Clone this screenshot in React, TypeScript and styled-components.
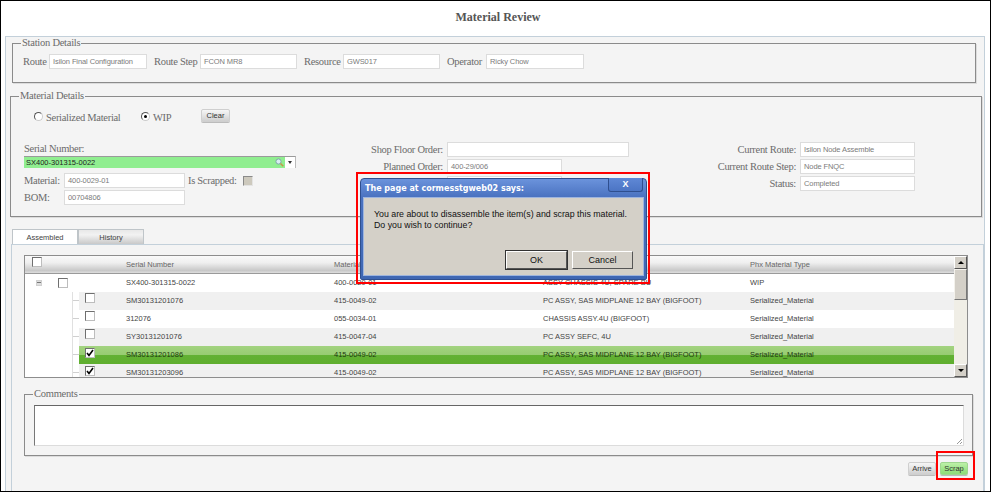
import { createGlobalStyle, styled } from "styled-components";

const GlobalStyle = createGlobalStyle`
	html, body {
		margin: 0;
		padding: 0;
		background: #fff;
		overflow: hidden;
	}
	* {
		box-sizing: border-box;
	}
`;

const SERIF = `"Liberation Serif", serif`;
const SANS = `"Liberation Sans", sans-serif`;

const Frame = styled.div`
	position: relative;
	width: 991px;
	height: 492px;
	border: 1px solid #000;
	background: #fff;
	overflow: hidden;
`;

const PageTitle = styled.h1`
	margin: 0;
	height: 35px;
	padding: 9px 0 0 5px;
	text-align: center;
	font: bold 12px/14px ${SERIF};
	color: #555;
`;

const Panel = styled.div`
	margin-left: 4px;
	width: 980px;
	height: 460px;
	border: 1px solid #c3d0da;
	background: #f4f4f4;
	padding: 0 0 0 4px;
`;

const Group = styled.fieldset<{ $left: number; $width: number; $height: number }>`
	margin: 0 0 0 ${(p) => p.$left}px;
	padding: 0;
	width: ${(p) => p.$width}px;
	height: ${(p) => p.$height}px;
	border: 1px solid #8b8b8b;
	box-shadow: 1px 1px 0 #dcdcdc;
	min-width: 0;
`;

const GroupTitle = styled.legend`
	margin-left: 8px;
	padding: 0 1px;
	font: 10.5px/12px ${SERIF};
	letter-spacing: -0.25px;
	color: #6b6b6b;
`;

const StationRow = styled.div`
	display: flex;
	align-items: center;
	padding: 5px 0 0 10px;
`;

const Label = styled.span`
	font: 10.5px/14px ${SERIF};
	letter-spacing: -0.3px;
	color: #6b6b6b;
	white-space: nowrap;
`;

const StationLabel = styled(Label)<{ $width: number }>`
	width: ${(p) => p.$width}px;
	flex: none;
`;

const Field = styled.div<{ $width: number }>`
	width: ${(p) => p.$width}px;
	height: 15px;
	flex: none;
	border: 1px solid #dcdcdc;
	background: #fff;
	padding-left: 3px;
	text-align: left;
	font: 7.5px/13px ${SANS};
	letter-spacing: -0.1px;
	color: #7b7b7b;
	white-space: nowrap;
	overflow: hidden;
`;

const StationField = styled(Field)`
	margin-right: 7px;
`;

const MaterialGroup = styled(Group)`
	margin-top: 7px;
`;

const RadioRow = styled.div`
	display: flex;
	align-items: center;
	height: 22px;
	margin-top: 5px;
	padding-left: 23px;
`;

const RadioItem = styled.label<{ $width: number }>`
	display: flex;
	align-items: center;
	gap: 3px;
	width: ${(p) => p.$width}px;
`;

const Radio = styled.span<{ $on?: boolean }>`
	position: relative;
	top: -2px;
	width: 9px;
	height: 9px;
	border-radius: 50%;
	border: 1px solid #555;
	border-right-color: #ccc;
	border-bottom-color: #ccc;
	background: #fff;
	display: flex;
	align-items: center;
	justify-content: center;
	&::after {
		content: "";
		width: 3px;
		height: 3px;
		border-radius: 50%;
		background: ${(p) => (p.$on ? "#000" : "transparent")};
	}
`;

const SmallButton = styled.button<{ $green?: boolean }>`
	height: 13px;
	padding: 0;
	border: 1px solid ${(p) => (p.$green ? "#9ed68f" : "#cfcfcf")};
	border-radius: 2px;
	background: ${(p) =>
		p.$green
			? "linear-gradient(#bdf0a8, #9fe58a 55%, #8edc78)"
			: "linear-gradient(#f6f6f6, #e4e4e4 50%, #cfcfcf)"};
	box-shadow: 0 1px 0 #bbb;
	font: 7.5px/11px ${SANS};
	color: #333;
`;

const ClearButton = styled(SmallButton)`
	width: 29px;
	position: relative;
	top: -3px;
`;

const Columns = styled.div`
	display: grid;
	grid-template-columns: 348px 337px 1fr;
	margin-top: 13px;
`;

const LeftColumn = styled.div`
	padding-left: 13px;
`;

const SerialLabel = styled(Label)`
	display: block;
`;

const Combo = styled.div`
	display: flex;
	width: 272px;
	height: 12px;
	border-top: 1px solid #9a9a9a;
	border-right: 1px solid #bbb;
	background: #fff;
`;

const ComboText = styled.div`
	flex: 1;
	display: flex;
	justify-content: space-between;
	align-items: center;
	background: #90ee90;
	padding: 0 1px 0 2px;
	font: 7.5px/11px ${SANS};
	color: #222;
`;

const ComboArrow = styled.div`
	width: 10px;
	display: flex;
	align-items: center;
	justify-content: center;
	&::after {
		content: "";
		border: 2.5px solid transparent;
		border-top: 3px solid #333;
		border-bottom: 0;
	}
`;

const MaterialRow = styled.div`
	display: flex;
	align-items: center;
	height: 15px;
	margin-top: 2px;
`;

const FirstMaterialRow = styled(MaterialRow)`
	margin-top: 5px;
`;

const MaterialLabel = styled(Label)`
	width: 40px;
	flex: none;
`;

const ScrapLabel = styled(Label)`
	width: 55px;
	flex: none;
	margin-left: 3px;
`;

const ScrapBox = styled.span`
	width: 10px;
	height: 10px;
	background: #cdc9bd;
	border: 1px solid #8a8a8a;
	border-right-color: #e4e4e4;
	border-bottom-color: #e4e4e4;
`;

const StackColumn = styled.div`
	display: flex;
	flex-direction: column;
	gap: 2px;
`;

const LabelledRow = styled.div<{ $labelWidth: number }>`
	display: grid;
	grid-template-columns: ${(p) => p.$labelWidth}px auto;
	justify-content: start;
	column-gap: 4px;
	align-items: center;
	height: 15px;
	text-align: right;
`;

const TabRow = styled.div`
	display: flex;
	margin: 12px 0 0 2px;
	height: 15px;
`;

const Tab = styled.div<{ $active?: boolean }>`
	width: 66px;
	text-align: center;
	border: 1px solid #bfc5c9;
	border-bottom: 0;
	background: ${(p) => (p.$active ? "#fff" : "linear-gradient(#e8e8e8, #f2f2f2 35%, #c9c9c9)")};
	font: 7.5px/15px ${SANS};
	color: #444;
`;

const TabPanel = styled.div`
	margin-left: 1px;
	width: 973px;
	height: 247px;
	border-left: 1px solid #c3d0da;
	border-top: 1px solid #c3d0da;
	border-right: 1px solid #c3d0da;
	padding: 10px 0 0 12px;
`;

const Grid = styled.div`
	display: flex;
	width: 944px;
	height: 123px;
	border: 1px solid #8d8d8d;
	background: #fff;
`;

const GridBody = styled.div`
	flex: 1;
	min-width: 0;
	overflow: hidden;
`;

const HeaderRow = styled.div`
	display: grid;
	grid-template-columns: 101px 208px 209px 207px 1fr;
	align-items: center;
	height: 18px;
	background: linear-gradient(#fafafa, #efefef 40%, #c8c8c8 85%, #dedede);
	border-bottom: 1px solid #9a9a9a;
	font: 7.5px/17px ${SANS};
	color: #666;
`;

const Box = styled.span`
	display: inline-flex;
	align-items: center;
	justify-content: center;
	width: 10px;
	height: 10px;
	background: #fff;
	border: 1px solid #6f6f6f;
	border-right-color: #bdbdbd;
	border-bottom-color: #bdbdbd;
`;

const HeaderBox = styled(Box)`
	margin-left: 7px;
`;

const RootCell = styled.div`
	display: flex;
	align-items: center;
	padding-left: 11px;
	gap: 16px;
`;

const Expander = styled.span`
	width: 6px;
	height: 6px;
	background: #dedede;
	border: 1px solid #d0d0d0;
	position: relative;
	&::after {
		content: "";
		position: absolute;
		left: 0;
		top: 1px;
		width: 4px;
		height: 1px;
		background: #777;
	}
`;

const Row = styled.div<{ $shade?: "alt" | "selected" }>`
	display: grid;
	align-items: center;
	height: 18px;
	font: 7.5px/18px ${SANS};
	white-space: nowrap;
	background: ${(p) =>
		p.$shade === "selected"
			? "linear-gradient(#a3d380, #97cc72 48%, #62b133 50%, #5fae2f)"
			: p.$shade === "alt"
				? "#f0f0f0"
				: "#fff"};
	color: ${(p) => (p.$shade === "selected" ? "#1d3a10" : "#444")};
`;

const RootRow = styled(Row)`
	grid-template-columns: 101px 208px 209px 207px 1fr;
`;

const ChildLine = styled.div`
	display: flex;
	height: 18px;
`;

const TreeGutter = styled.div`
	position: relative;
	width: 54px;
	background: #fff;
	&::before {
		content: "";
		position: absolute;
		left: 47px;
		top: 0;
		bottom: 0;
		width: 1px;
		background: #e0e0e0;
	}
	&::after {
		content: "";
		position: absolute;
		left: 48px;
		top: 8px;
		width: 6px;
		height: 1px;
		background: #d0d0d0;
	}
`;

const ChildRow = styled(Row)`
	flex: 1;
	grid-template-columns: 47px 208px 209px 207px 1fr;
`;

const ChildBox = styled(Box)`
	margin-left: 6px;
`;

const ScrollBar = styled.div`
	width: 13px;
	display: flex;
	flex-direction: column;
	background: #f0eee6;
`;

const ScrollButton = styled.div<{ $down?: boolean }>`
	height: 13px;
	flex: none;
	background: #d4d0c8;
	border: 1px solid #fff;
	border-right-color: #555;
	border-bottom-color: #555;
	display: flex;
	align-items: center;
	justify-content: center;
	&::after {
		content: "";
		border: 3px solid transparent;
		${(p) => (p.$down ? "border-top: 3px solid #000; border-bottom: 0;" : "border-bottom: 3px solid #000; border-top: 0;")}
	}
`;

const ScrollThumb = styled.div`
	height: 31px;
	flex: none;
	background: #d4d0c8;
	border: 1px solid #f4f2ec;
	border-right-color: #777;
	border-bottom-color: #777;
`;

const ScrollTrack = styled.div`
	flex: 1;
`;

const CommentsGroup = styled(Group)`
	margin-top: 10px;
`;

const CommentBox = styled.div`
	margin: 5px 0 0 9px;
	width: 930px;
	height: 41px;
	background: #fff;
	border: 1px solid #dcdcdc;
	border-top: 1px solid #666;
	border-left: 1px solid #777;
	position: relative;
`;

const ResizeGrip = styled.svg`
	position: absolute;
	right: 0;
	bottom: 0;
`;

const Actions = styled.div`
	display: flex;
	justify-content: flex-end;
	gap: 4px;
	width: 944px;
	margin-top: 6px;
`;

const ActionButton = styled(SmallButton)`
	width: 28px;
`;

const Dialog = styled.div`
	position: absolute;
	left: 359px;
	top: 177px;
	width: 287px;
	height: 102px;
	border-radius: 4px 4px 2px 2px;
	background: linear-gradient(#6b93dc, #4a72c0 18%, #3f67b3);
	border: 1px solid #2f4f8f;
	padding: 18px 2px 3px;
`;

const DialogTitle = styled.div`
	position: absolute;
	left: 4px;
	top: 4px;
	font: bold 8px/11px "DejaVu Sans", sans-serif;
	color: #fff;
	white-space: nowrap;
`;

const DialogClose = styled.div`
	position: absolute;
	right: 3px;
	top: -1px;
	width: 35px;
	height: 14px;
	border: 1px solid #2f4f8f;
	border-top: 0;
	border-radius: 0 0 3px 3px;
	background: linear-gradient(#5f88d6, #4c75c4);
	color: #fff;
	text-align: center;
	font: bold 9px/12px ${SANS};
`;

const DialogBody = styled.div`
	height: 100%;
	background: #d4d0c8;
	border: 1px solid #9db4de;
	padding: 11px 10px 0;
	font: 8.8px/11px ${SANS};
	color: #111;
	display: flex;
	flex-direction: column;
`;

const DialogActions = styled.div`
	display: flex;
	justify-content: flex-end;
	gap: 5px;
	margin-top: 20px;
`;

const DialogButton = styled.button<{ $primary?: boolean }>`
	width: 61px;
	height: 18px;
	padding: 0;
	background: #d4d0c8;
	border: 1px solid #fff;
	border-right-color: #555;
	border-bottom-color: #555;
	outline: ${(p) => (p.$primary ? "1px solid #333" : "none")};
	font: 9px/14px ${SANS};
	color: #111;
`;

const Highlight = styled.div<{ $left: number; $top: number; $width: number; $height: number }>`
	position: absolute;
	left: ${(p) => p.$left}px;
	top: ${(p) => p.$top}px;
	width: ${(p) => p.$width}px;
	height: ${(p) => p.$height}px;
	border: 2px solid #f00;
	pointer-events: none;
`;

const Check = () => (
	<svg width="8" height="8" viewBox="0 0 8 8">
		<path d="M1 4l2 2.5L7 1" fill="none" stroke="#000" strokeWidth="1.6" />
	</svg>
);

const Magnifier = () => (
	<svg width="9" height="9" viewBox="0 0 9 9">
		<circle cx="3.5" cy="3.5" r="2.6" fill="#d8eef0" stroke="#7fa8a8" strokeWidth="1" />
		<path d="M5.5 5.5L8.3 8.3" stroke="#c49a4a" strokeWidth="1.6" />
	</svg>
);

const children: { serial: string; material: string; description: string; shade?: "alt" | "selected"; checked?: boolean }[] = [
	{ serial: "SM30131201076", material: "415-0049-02", description: "PC ASSY, SAS MIDPLANE 12 BAY (BIGFOOT)", shade: "alt" },
	{ serial: "312076", material: "055-0034-01", description: "CHASSIS ASSY.4U (BIGFOOT)" },
	{ serial: "SY30131201076", material: "415-0047-04", description: "PC ASSY SEFC, 4U", shade: "alt" },
	{ serial: "SM30131201086", material: "415-0049-02", description: "PC ASSY, SAS MIDPLANE 12 BAY (BIGFOOT)", shade: "selected", checked: true },
	{ serial: "SM30131203096", material: "415-0049-02", description: "PC ASSY, SAS MIDPLANE 12 BAY (BIGFOOT)", shade: "alt", checked: true },
];

export default function App() {
	return (
		<>
			<GlobalStyle />
			<Frame>
				<PageTitle>Material Review</PageTitle>
				<Panel>
					<Group $left={2} $width={964} $height={46}>
						<GroupTitle>Station Details</GroupTitle>
						<StationRow>
							<StationLabel $width={26}>Route</StationLabel>
							<StationField $width={98}>Isilon Final Configuration</StationField>
							<StationLabel $width={46}>Route Step</StationLabel>
							<StationField $width={97}>FCON MR8</StationField>
							<StationLabel $width={39}>Resource</StationLabel>
							<StationField $width={97}>GWS017</StationField>
							<StationLabel $width={39}>Operator</StationLabel>
							<StationField $width={98}>Ricky Chow</StationField>
						</StationRow>
					</Group>
					<MaterialGroup $left={0} $width={972} $height={127}>
						<GroupTitle>Material Details</GroupTitle>
						<RadioRow>
							<RadioItem $width={107}>
								<Radio />
								<Label>Serialized Material</Label>
							</RadioItem>
							<RadioItem $width={60}>
								<Radio $on />
								<Label>WIP</Label>
							</RadioItem>
							<ClearButton>Clear</ClearButton>
						</RadioRow>
						<Columns>
							<LeftColumn>
								<SerialLabel>Serial Number:</SerialLabel>
								<Combo>
									<ComboText>
										SX400-301315-0022
										<Magnifier />
									</ComboText>
									<ComboArrow />
								</Combo>
								<FirstMaterialRow>
									<MaterialLabel>Material:</MaterialLabel>
									<Field $width={121}>400-0029-01</Field>
									<ScrapLabel>Is Scrapped:</ScrapLabel>
									<ScrapBox />
								</FirstMaterialRow>
								<MaterialRow>
									<MaterialLabel>BOM:</MaterialLabel>
									<Field $width={121}>00704806</Field>
								</MaterialRow>
							</LeftColumn>
							<StackColumn>
								<LabelledRow $labelWidth={84}>
									<Label>Shop Floor Order:</Label>
									<Field $width={182} />
								</LabelledRow>
								<LabelledRow $labelWidth={84}>
									<Label>Planned Order:</Label>
									<Field $width={115}>400-29/006</Field>
								</LabelledRow>
								<LabelledRow $labelWidth={84}>
									<span />
									<Field $width={115} />
								</LabelledRow>
							</StackColumn>
							<StackColumn>
								<LabelledRow $labelWidth={100}>
									<Label>Current Route:</Label>
									<Field $width={115}>Isilon Node Assemble</Field>
								</LabelledRow>
								<LabelledRow $labelWidth={100}>
									<Label>Current Route Step:</Label>
									<Field $width={115}>Node FNQC</Field>
								</LabelledRow>
								<LabelledRow $labelWidth={100}>
									<Label>Status:</Label>
									<Field $width={115}>Completed</Field>
								</LabelledRow>
							</StackColumn>
						</Columns>
					</MaterialGroup>
					<TabRow>
						<Tab $active>Assembled</Tab>
						<Tab>History</Tab>
					</TabRow>
					<TabPanel>
						<Grid>
							<GridBody>
								<HeaderRow>
									<span>
										<HeaderBox />
									</span>
									<span>Serial Number</span>
									<span>Material</span>
									<span />
									<span>Phx Material Type</span>
								</HeaderRow>
								<RootRow>
									<RootCell>
										<Expander />
										<Box />
									</RootCell>
									<span>SX400-301315-0022</span>
									<span>400-0029-01</span>
									<span>ASSY CHASSIS 4U, SPARE BU</span>
									<span>WIP</span>
								</RootRow>
								{children.map((item) => (
									<ChildLine key={item.serial}>
										<TreeGutter />
										<ChildRow $shade={item.shade}>
											<span>
												<ChildBox>{item.checked && <Check />}</ChildBox>
											</span>
											<span>{item.serial}</span>
											<span>{item.material}</span>
											<span>{item.description}</span>
											<span>Serialized_Material</span>
										</ChildRow>
									</ChildLine>
								))}
							</GridBody>
							<ScrollBar>
								<ScrollButton />
								<ScrollThumb />
								<ScrollTrack />
								<ScrollButton $down />
							</ScrollBar>
						</Grid>
						<CommentsGroup $left={0} $width={949} $height={68}>
							<GroupTitle>Comments</GroupTitle>
							<CommentBox>
								<ResizeGrip width="7" height="7" viewBox="0 0 7 7">
									<path d="M1 6L6 1M4 6L6 4" stroke="#999" strokeWidth="1" />
								</ResizeGrip>
							</CommentBox>
						</CommentsGroup>
						<Actions>
							<ActionButton>Arrive</ActionButton>
							<ActionButton $green>Scrap</ActionButton>
						</Actions>
					</TabPanel>
				</Panel>
				<Dialog>
					<DialogTitle>The page at cormesstgweb02 says:</DialogTitle>
					<DialogClose>X</DialogClose>
					<DialogBody>
						<div>You are about to disassemble the item(s) and scrap this material.</div>
						<div>Do you wish to continue?</div>
						<DialogActions>
							<DialogButton $primary>OK</DialogButton>
							<DialogButton>Cancel</DialogButton>
						</DialogActions>
					</DialogBody>
				</Dialog>
				<Highlight $left={355} $top={171} $width={294} $height={112} />
				<Highlight $left={935} $top={450} $width={39} $height={29} />
			</Frame>
		</>
	);
}
